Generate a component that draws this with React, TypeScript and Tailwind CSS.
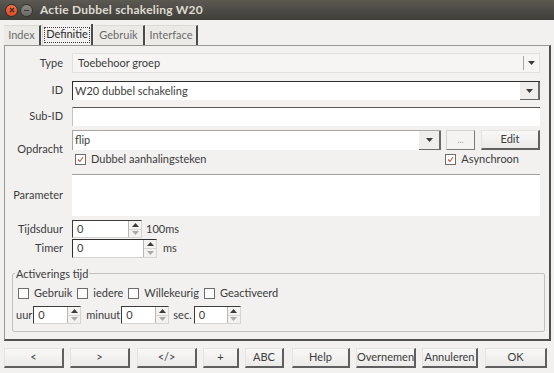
import React from "react";

const font = { fontFamily: 'Lato, "Open Sans", sans-serif' };

function Arrow({ up = false, dim = false }: { up?: boolean; dim?: boolean }) {
  return (
    <svg width="7" height="4" viewBox="0 0 7 4">
      <path d={up ? "M0 4 L3.5 0 L7 4 Z" : "M0 0 L7 0 L3.5 4 Z"} fill={dim ? "#a9a9a9" : "#3c3c3c"} />
    </svg>
  );
}

function Check({ checked = false }: { checked?: boolean }) {
  return (
    <span className="w-[11px] h-[11px] border border-[#6d6d6d] bg-white flex items-center justify-center shrink-0">
      {checked && (
        <svg width="7" height="7" viewBox="0 0 7 7">
          <path d="M1 3.5 L3 5.5 L6 1" stroke="#c4553a" strokeWidth="1.1" fill="none" />
        </svg>
      )}
    </span>
  );
}

function CheckLabel({ label, checked = false }: { label: string; checked?: boolean }) {
  return (
    <span className="flex items-center gap-[5px]">
      <Check checked={checked} />
      <span>{label}</span>
    </span>
  );
}

function Spin({ w, h = "h-[19px]", dark = false }: { w: string; h?: string; dark?: boolean }) {
  return (
    <div className={`${w} ${h} flex bg-white border-l border-t ${dark ? "border-[#2e2e2e]" : "border-[#3c3c3c]"} border-r border-b border-r-[#d6d4d0] border-b-[#d6d4d0]`}>
      <span className="flex-1 pl-[4px] flex items-center">0</span>
      <div className="w-[13px] flex flex-col border-l border-[#b9b7b3] bg-[#f3f2f0]">
        <div className="flex-1 flex items-center justify-center border-b border-[#d6d4d0]">
          <Arrow up />
        </div>
        <div className="flex-1 flex items-center justify-center">
          <Arrow dim />
        </div>
      </div>
    </div>
  );
}

function Btn({ w, label }: { w: string; label: string }) {
  return (
    <div className={`${w} h-[20px] flex items-center justify-center bg-gradient-to-b from-[#f8f8f7] to-[#ebeae8] border-t border-l border-[#e4e3e0] border-r-[2px] border-b-[2px] border-r-[#5f5f5f] border-b-[#5f5f5f] text-[#3c3c3c]`}>
      {label}
    </div>
  );
}

function Label({ children, className = "" }: { children: React.ReactNode; className?: string }) {
  return <div className={`text-right pr-[1px] text-[#3c3c3c] ${className}`}>{children}</div>;
}

export default function App() {
  const tabs = ["Index", "Definitie", "Gebruik", "Interface"];
  const tabW = ["w-[37px]", "w-[51px]", "w-[51px]", "w-[52px]"];

  return (
    <div className="w-[554px] h-[373px] bg-[#f2f1f0] flex flex-col text-[11px] text-[#3c3c3c] overflow-hidden" style={font}>
      {/* Title bar */}
      <div className="h-[20px] bg-gradient-to-b from-[#5c5953] to-[#3f3e3a] flex items-center pl-[5px] gap-[2px]">
        <span className="w-[13px] h-[13px] rounded-full bg-gradient-to-b from-[#f0714a] to-[#d64a23] border border-[#3a2a22] flex items-center justify-center">
          <svg width="6" height="6" viewBox="0 0 6 6">
            <path d="M1 1 L5 5 M5 1 L1 5" stroke="#4a2a1c" strokeWidth="1.3" />
          </svg>
        </span>
        <span className="w-[13px] h-[13px] rounded-full bg-gradient-to-b from-[#8c8a85] to-[#6b6964] border border-[#33322f] flex items-center justify-center">
          <span className="w-[5px] h-[1px] bg-[#3a3935]" />
        </span>
        <span className="ml-[5px] text-[12px] font-bold text-[#dfdbd2] tracking-[0.2px]">Actie Dubbel schakeling W20</span>
      </div>

      {/* Tabs */}
      <div className="h-[25px] pt-[5px] pl-[4px] flex items-end">
        {tabs.map((t, i) => {
          const sel = i === 1;
          return (
            <div
              key={t}
              className={`${tabW[i]} ${sel ? "h-[21px] bg-[#f2f1f0] border-l border-[#d8d6d2]" : "h-[20px] bg-[#eceae7] border-t border-[#dcdad6]"} mr-[1px] border-r-[2px] border-r-[#4a4a4a] flex items-center justify-center ${sel ? "text-[#2e2e2e]" : "text-[#6a6a6a]"}`}
            >
              {sel ? (
                <span className="border border-dotted border-[#3c3c3c] px-[1px] h-[16px] flex items-center">{t}</span>
              ) : (
                t
              )}
            </div>
          );
        })}
      </div>

      {/* Panel */}
      <div className="ml-[4px] w-[547px] h-[296px] border-t border-l border-[#9a9894] border-r-[2px] border-b-[2px] border-r-[#505050] border-b-[#505050] pt-[7px] pr-[9px] flex flex-col">
        <div className="grid grid-cols-[59px_1fr] gap-x-[8px] items-center">
          <Label>Type</Label>
          <div className="h-[20px] bg-[#f6f5f3] border border-[#e3e1dd] flex items-center pl-[5px]">
            <span className="flex-1">Toebehoor groep</span>
            <span className="w-[16px] h-[14px] border-l border-[#a8a6a2] flex items-center justify-center">
              <Arrow />
            </span>
          </div>

          <Label className="mt-[8px]">ID</Label>
          <div className="mt-[8px] h-[19px] bg-white border-t border-l border-[#2f2f2f] flex items-center">
            <span className="flex-1 pl-[2px]">W20 dubbel schakeling</span>
            <span className="w-[20px] h-full bg-[#efeeec] border-r-[2px] border-b border-[#6a6a6a] flex items-center justify-center">
              <Arrow />
            </span>
          </div>

          <Label className="mt-[7px]">Sub-ID</Label>
          <div className="mt-[7px] h-[19px] bg-white border-t border-[#5a5a5a] border-l border-l-[#c6c4c0]" />

          <Label className="row-span-2 self-end pb-[12px]">Opdracht</Label>
          <div className="mt-[4px] h-[20px] flex items-center">
            <div className="flex-1 h-full flex bg-white border-t border-l border-[#a9a7a3]">
              <span className="flex-1 pl-[2px] flex items-center">flip</span>
              <span className="w-[22px] h-full bg-[#efeeec] border-r-[2px] border-b border-[#6a6a6a] flex items-center justify-center">
                <Arrow />
              </span>
            </div>
            <div className="ml-[5px] w-[29px] h-full bg-[#f4f3f1] border border-[#d4d2ce] border-r-[#7a7a7a] border-b-[#7a7a7a] flex items-center justify-center text-[#a5a39f] text-[9px]">
              ...
            </div>
            <div className="ml-[6px] w-[59px]">
              <Btn w="w-[59px]" label="Edit" />
            </div>
          </div>
          <div className="h-[19px] flex items-center justify-between pl-[3px] pr-[21px]">
            <CheckLabel label="Dubbel aanhalingsteken" checked />
            <CheckLabel label="Asynchroon" checked />
          </div>

          <Label className="mt-[5px]">Parameter</Label>
          <div className="mt-[5px] h-[42px] bg-white border-t border-[#a2a09c]" />

          <Label className="mt-[4px]">Tijdsduur</Label>
          <div className="mt-[4px] flex items-center gap-[4px]">
            <Spin w="w-[70px]" h="h-[18px]" />
            <span>100ms</span>
          </div>

          <Label className="mt-[1px]">Timer</Label>
          <div className="mt-[1px] flex items-center gap-[6px]">
            <Spin w="w-[85px]" dark />
            <span>ms</span>
          </div>
        </div>

        {/* Group box */}
        <div className="relative mt-[15px] ml-[7px] w-[533px] h-[59px] border border-[#c3c1bd] rounded-[2px] pt-[11px] pl-[5px]">
          <span className="absolute -top-[8px] left-[2px] bg-[#f2f1f0] px-[1px] text-[#3c3c3c]">Activerings tijd</span>
          <div className="flex items-center gap-[5px] h-[16px]">
            <CheckLabel label="Gebruik" />
            <CheckLabel label="iedere" />
            <CheckLabel label="Willekeurig" />
            <CheckLabel label="Geactiveerd" />
          </div>
          <div className="mt-[5px] flex items-center">
            <span className="mr-[1px] -ml-[2px]">uur</span>
            <Spin w="w-[48px]" h="h-[18px]" />
            <span className="ml-[5px] mr-[1px]">minuut</span>
            <Spin w="w-[48px]" h="h-[18px]" />
            <span className="ml-[4px] mr-[2px]">sec.</span>
            <Spin w="w-[47px]" h="h-[18px]" />
          </div>
        </div>
      </div>

      {/* Bottom buttons */}
      <div className="mt-[7px] pl-[4px] flex">
        <Btn w="w-[60px]" label="<" />
        <div className="ml-[6px]"><Btn w="w-[60px]" label=">" /></div>
        <div className="ml-[7px]"><Btn w="w-[60px]" label="</>" /></div>
        <div className="ml-[6px]"><Btn w="w-[36px]" label="+" /></div>
        <div className="ml-[6px]"><Btn w="w-[39px]" label="ABC" /></div>
        <div className="ml-[8px]"><Btn w="w-[58px]" label="Help" /></div>
        <div className="ml-[6px]"><Btn w="w-[60px]" label="Overnemen" /></div>
        <div className="ml-[6px]"><Btn w="w-[56px]" label="Annuleren" /></div>
        <div className="ml-[7px]"><Btn w="w-[62px]" label="OK" /></div>
      </div>
    </div>
  );
}
